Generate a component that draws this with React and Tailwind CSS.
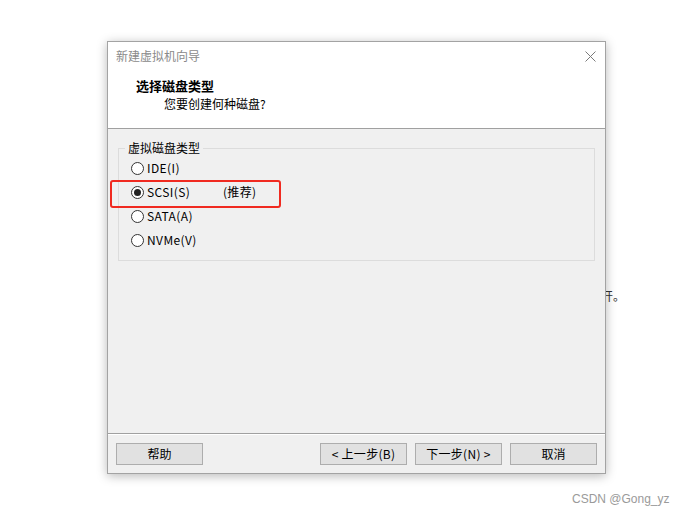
export default function App() {
  const options = [
    { label: "IDE(I)", checked: false },
    { label: "SCSI(S)", checked: true, note: "(推荐)" },
    { label: "SATA(A)", checked: false },
    { label: "NVMe(V)", checked: false },
  ];

  return (
    <div className="relative w-[683px] h-[516px] bg-white overflow-hidden font-['Noto_Sans_CJK_SC',sans-serif] text-[12px] leading-[16px] text-black">
      {/* text of the page behind the dialog */}
      <div className="absolute left-[589px] top-[288px] text-[#333]">打开。</div>

      {/* dialog window */}
      <div className="absolute left-[107px] top-[41px] z-10 w-[499px] h-[433px] flex flex-col border border-[#a3a3a3] bg-[#f0f0f0] shadow-[0_2px_10px_rgba(0,0,0,0.28)]">
        <div className="relative h-[87px] shrink-0 bg-white border-b border-[#a0a0a0] px-[8px] pt-[6px]">
          <div className="text-[#8a8a8a]">新建虚拟机向导</div>
          <svg className="absolute right-[9px] top-[9px]" width="11" height="11" viewBox="0 0 11 11">
            <path d="M0.5 0.5 L10.5 10.5 M10.5 0.5 L0.5 10.5" stroke="#7a7a7a" strokeWidth="1" />
          </svg>
          <div className="mt-[14px] pl-[20px] font-bold text-[13px]">选择磁盘类型</div>
          <div className="mt-[2px] pl-[48px]">您要创建何种磁盘?</div>
        </div>

        <div className="relative flex-1 px-[10px] pt-[11px]">
          <fieldset className="border border-[#dcdcdc] pb-[8px]">
            <legend className="ml-[6px] px-[3px] leading-[16px]">虚拟磁盘类型</legend>
            <div className="flex flex-col">
              {options.map((o) => (
                <div key={o.label} className="h-[24px] flex items-center pl-[12px]">
                  <span className="w-[13px] h-[13px] rounded-full border border-[#333] bg-white flex items-center justify-center">
                    {o.checked && <span className="w-[7px] h-[7px] rounded-full bg-[#222]" />}
                  </span>
                  <span className="ml-[3px] w-[76px] tracking-[0.4px]">{o.label}</span>
                  {o.note && <span className="tracking-[0.3px]">{o.note}</span>}
                </div>
              ))}
            </div>
          </fieldset>
          {/* highlight box */}
          <div className="absolute left-[2px] top-[51px] w-[171px] h-[28px] border-2 border-[#f02a20] rounded-[3px]" />
        </div>

        <div className="h-[40px] shrink-0 border-t border-[#a0a0a0] shadow-[inset_0_1px_0_#ffffff] flex items-start pt-[9px] px-[8px]">
          <button className="w-[87px] h-[22px] bg-[#e1e1e1] border border-[#adadad] leading-[20px]">帮助</button>
          <div className="ml-auto flex gap-[8px]">
            <button className="w-[87px] h-[22px] bg-[#e1e1e1] border border-[#adadad] leading-[20px] tracking-[0.3px]">&lt; 上一步(B)</button>
            <button className="w-[87px] h-[22px] bg-[#e1e1e1] border border-[#adadad] leading-[20px] tracking-[0.3px]">下一步(N) &gt;</button>
            <button className="w-[87px] h-[22px] bg-[#e1e1e1] border border-[#adadad] leading-[20px]">取消</button>
          </div>
        </div>
      </div>

      <div className="absolute left-[572px] top-[491px] font-['Liberation_Sans',sans-serif] text-[12px] text-[#9a9a9a]">CSDN @Gong_yz</div>
    </div>
  );
}
